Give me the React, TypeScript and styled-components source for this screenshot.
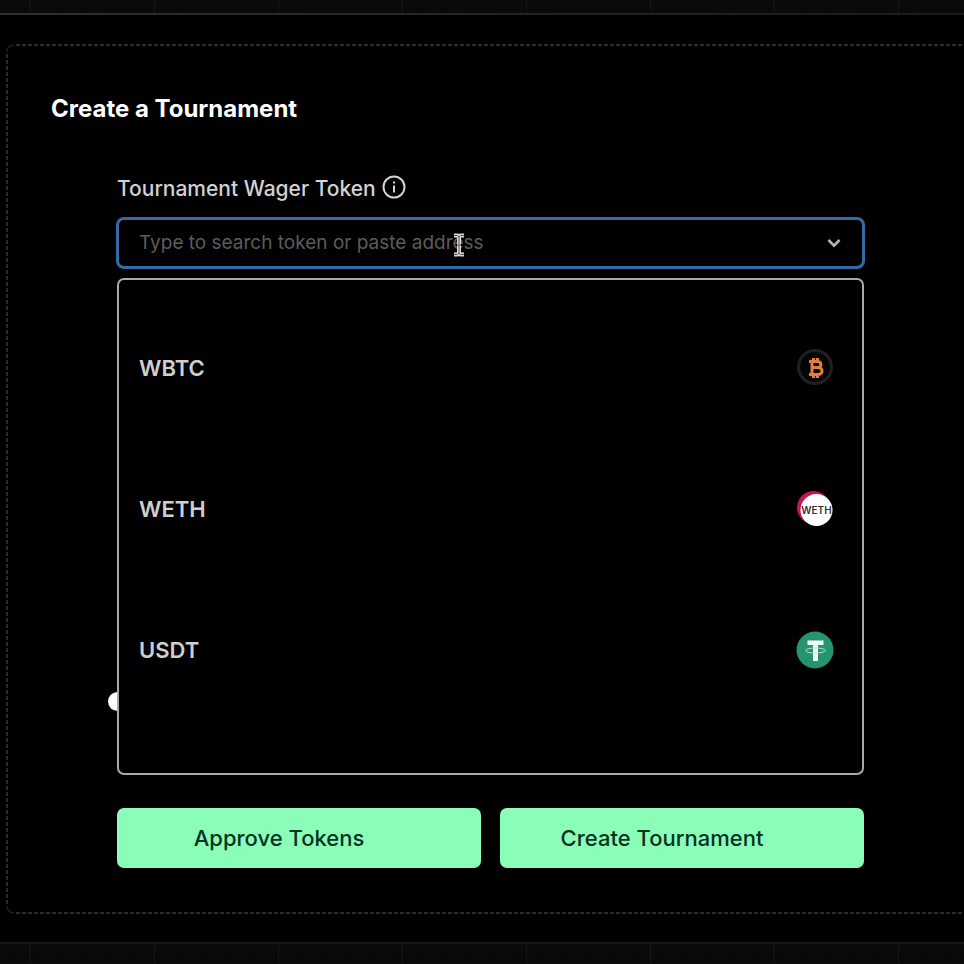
import React from "react";
import styled, { createGlobalStyle } from "styled-components";

const GlobalStyle = createGlobalStyle`
  *, *::before, *::after { box-sizing: border-box; }
  body {
    margin: 0;
    background: #000;
    color: #fff;
    font-family: Inter, "Liberation Sans", sans-serif;
  }
`;

const Page = styled.div`
  display: flex;
  flex-direction: column;
  min-height: 100vh;
  overflow: hidden;
  background-color: #09090b;
  background-image:
    repeating-linear-gradient(90deg, transparent 0 30px, #151517 30px 31px, transparent 31px 124px),
    repeating-linear-gradient(90deg, transparent 0 5px, #0d0d0f 5px 6px, transparent 6px 12px),
    repeating-linear-gradient(180deg, transparent 0 3px, #0d0d0f 3px 4px, transparent 4px 12px);
`;

const Section = styled.main`
  margin: 13px 0 20px;
  padding: 31px 0 30px;
  background:
    linear-gradient(90deg, #2f2f2f, #1a1a1b) 0 0 / 100% 2px no-repeat,
    linear-gradient(#161617, #161617) 0 100% / 100% 2px no-repeat,
    #000;
`;

const dash = "#2a2a2a";

const Card = styled.section`
  margin: 0 -11px 0 6px;
  padding: 47px 111px 46px;
  background:
    repeating-linear-gradient(90deg, ${dash} 0 4px, transparent 4px 6px) 10px 0 / calc(100% - 20px) 2px no-repeat,
    repeating-linear-gradient(90deg, ${dash} 0 4px, transparent 4px 6px) 10px 100% / calc(100% - 20px) 2px no-repeat,
    repeating-linear-gradient(180deg, ${dash} 0 4px, transparent 4px 6px) 0 10px / 2px calc(100% - 20px) no-repeat,
    radial-gradient(circle at 100% 100%, transparent 6px, ${dash} 7px, transparent 8px) 0 0 / 8px 8px no-repeat,
    radial-gradient(circle at 100% 0, transparent 6px, ${dash} 7px, transparent 8px) 0 100% / 8px 8px no-repeat;
`;

const Title = styled.h1`
  margin: 0 0 45px -66px;
  font-size: 24px;
  line-height: 36px;
  font-weight: 700;
`;

const FieldHead = styled.div`
  display: flex;
  align-items: center;
  gap: 6px;
  height: 34px;
  color: #d2d2d2;
`;

const Label = styled.label`
  font-size: 21px;
  line-height: 34px;
  font-weight: 500;
`;

const InfoButton = styled.button`
  display: flex;
  padding: 0 0 4px;
  border: 0;
  background: none;
  color: inherit;
`;

const Combo = styled.div`
  position: relative;
  margin-top: 11px;
`;

const Field = styled.div`
  display: flex;
  align-items: center;
  height: 52px;
  margin: 0 -1px;
  padding: 0 20px 0 20px;
  border: 3px solid #356ba4;
  border-radius: 8px;
`;

const SearchInput = styled.input`
  flex: 1;
  min-width: 0;
  height: 28px;
  padding: 0;
  border: 0;
  outline: 0;
  background: none;
  color: #fff;
  font: 400 19px/28px Inter, "Liberation Sans", sans-serif;
  &::placeholder { color: #5c5c5c; opacity: 1; }
`;

const Toggle = styled.button`
  display: flex;
  padding: 0;
  border: 0;
  background: none;
  color: #b5b5b5;
`;

const Pointer = styled.svg`
  position: absolute;
  left: 335px;
  top: 16px;
`;

const Menu = styled.ul`
  position: absolute;
  z-index: 1;
  top: 61px;
  left: 0;
  right: 0;
  margin: 0;
  padding: 17px 0 53px;
  list-style: none;
  background: #000;
  border: 2px solid #a9a9a9;
  border-radius: 7px;
`;

const Option = styled.li`
  display: flex;
  align-items: center;
  justify-content: space-between;
  height: 141px;
  padding: 0 28px 0 20px;
  color: #cfcfcf;
  font-size: 22px;
  line-height: 30px;
  font-weight: 600;
`;

const Settings = styled.div`
  display: flex;
  align-items: flex-end;
  height: 539px;
  padding-bottom: 97px;
`;

const Slider = styled.input`
  appearance: none;
  flex: 1;
  height: 19px;
  margin: 0 -9px;
  background: none;
  &::-webkit-slider-thumb {
    appearance: none;
    width: 19px;
    height: 19px;
    border-radius: 50%;
    background: #fff;
  }
`;

const Actions = styled.div`
  display: grid;
  grid-template-columns: 1fr 1fr;
  gap: 19px;
`;

const ActionButton = styled.button`
  height: 60px;
  padding: 0 40px 0 0;
  border: 0;
  border-radius: 7px;
  background: #8afdb9;
  color: #07331f;
  font: 500 22px/30px Inter, "Liberation Sans", sans-serif;
`;

const InfoIcon = () => (
  <svg width="24" height="24" viewBox="0 0 24 24" fill="none" stroke="currentColor" strokeWidth="2">
    <circle cx="12" cy="12" r="10.5" />
    <path d="M12 10.5v7M12 6.5v2" />
  </svg>
);

const Chevron = () => (
  <svg width="16" height="12" viewBox="0 0 16 12" fill="none" stroke="currentColor" strokeWidth="2.6">
    <path d="M2.5 3 8 8.7 13.5 3" />
  </svg>
);

const TextCursor = () => (
  <Pointer width="14" height="24" viewBox="0 0 14 24" fill="none" aria-hidden="true">
    <path d="M2 2.5h3.5L7 4l1.5-1.5H12M7 4v16M2 21.5h3.5L7 20l1.5 1.5H12M5 12h4" stroke="#d8d8d8" strokeWidth="4" />
    <path d="M2 2.5h3.5L7 4l1.5-1.5H12M7 4v16M2 21.5h3.5L7 20l1.5 1.5H12M5 12h4" stroke="#555" strokeWidth="1" />
  </Pointer>
);

const BitcoinLogo = () => (
  <svg width="38" height="38" viewBox="0 0 38 38" fill="none">
    <circle cx="19" cy="18" r="16.5" fill="#050505" stroke="#202020" strokeWidth="3" />
    <path
      d="M13 12.5h8c5 0 5 5.500 1 6 5.500 0 5.500 7-.5 7H13M16 12.500v13M16 18.500h6M17.500 9v3.500M21.500 9v3.500M17.500 25.500V29M21.500 25.500V29"
      stroke="#e07f3e"
      strokeWidth="3"
    />
  </svg>
);

const WethLogo = () => (
  <svg width="38" height="38" viewBox="0 0 38 38">
    <circle cx="17.5" cy="17.5" r="16.5" fill="#c31558" />
    <circle cx="20.5" cy="20" r="16" fill="#fff" />
    <text x="20.5" y="24" textAnchor="middle" fontFamily="Inter, sans-serif" fontSize="10" fontWeight="600" fill="#333">
      WETH
    </text>
  </svg>
);

const TetherLogo = () => (
  <svg width="38" height="38" viewBox="0 0 38 38">
    <circle cx="19" cy="19" r="18.5" fill="#26946f" />
    <path d="M11.5 9.5h16v4.5h-5.500v16h-5V14h-5.500z" fill="#f4fffb" />
    <ellipse cx="19.500" cy="19.500" rx="10" ry="2.500" fill="none" stroke="#b5ddce" strokeWidth="1" />
  </svg>
);

const tokens = [
  { symbol: "WBTC", Logo: BitcoinLogo },
  { symbol: "WETH", Logo: WethLogo },
  { symbol: "USDT", Logo: TetherLogo },
];

export default function App() {
  return (
    <>
      <GlobalStyle />
      <Page>
        <Section>
          <Card>
            <Title>Create a Tournament</Title>
            <FieldHead>
              <Label htmlFor="token">Tournament Wager Token</Label>
              <InfoButton type="button" aria-label="About the wager token">
                <InfoIcon />
              </InfoButton>
            </FieldHead>
            <Combo>
              <Field>
                <SearchInput
                  id="token"
                  role="combobox"
                  aria-expanded="true"
                  aria-controls="token-list"
                  placeholder="Type to search token or paste address"
                />
                <Toggle type="button" aria-label="Toggle token list">
                  <Chevron />
                </Toggle>
              </Field>
              <TextCursor />
              <Menu id="token-list" role="listbox" aria-label="Tokens">
                {tokens.map(({ symbol, Logo }) => (
                  <Option key={symbol} role="option" aria-selected="false">
                    {symbol}
                    <Logo />
                  </Option>
                ))}
              </Menu>
            </Combo>
            <Settings>
              <Slider type="range" min="0" max="100" defaultValue="0" aria-label="Wager amount" />
            </Settings>
            <Actions>
              <ActionButton type="button">Approve Tokens</ActionButton>
              <ActionButton type="button">Create Tournament</ActionButton>
            </Actions>
          </Card>
        </Section>
      </Page>
    </>
  );
}
